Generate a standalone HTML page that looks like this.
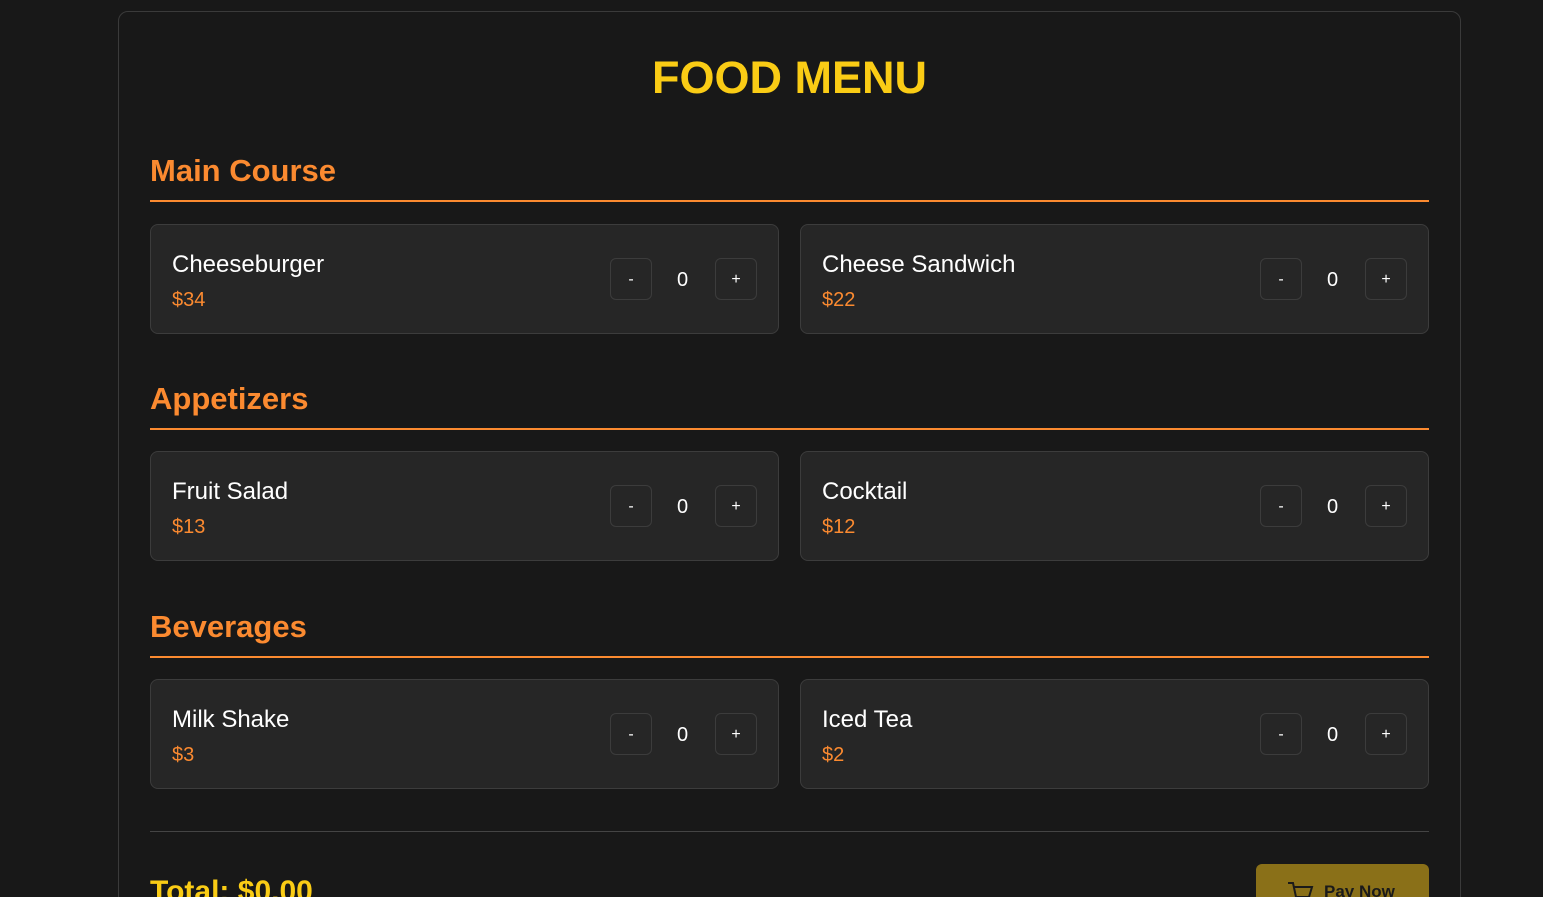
<!DOCTYPE html><html style="overflow:hidden;height:897px"><head><style>
body{margin:0;background:#181818;font-family:"Liberation Sans",sans-serif;width:1543px;height:897px;overflow:hidden;position:relative}
.c{position:absolute;left:118px;top:11px;width:1341px;height:900px;border:1px solid #3a3a3a;border-radius:10px;background:#181818}
h1{position:absolute;left:0;width:1579px;top:52px;margin:0;text-align:center;color:#facc15;font-size:45px;font-weight:bold;line-height:52px}
.h{position:absolute;left:150px;width:1279px;color:#fb8a30;font-size:31px;font-weight:bold;border-bottom:2px solid #fb8a30;height:46px;line-height:34px}
.card{position:absolute;width:627px;height:108px;background:#262626;border:1px solid #3c3c3c;border-radius:8px}
.n{position:absolute;left:21px;top:26px;color:#fff;font-size:24px}
.p{position:absolute;left:21px;top:64px;color:#fb8a30;font-size:20px}
.b{position:absolute;top:33px;border:1px solid #3c3c3c;border-radius:6px;color:#fff;font-size:16px;text-align:center;line-height:42px;box-sizing:border-box;width:42px;height:42px}
.q{position:absolute;left:526px;top:44px;color:#fff;font-size:20px}
</style></head><body>
<div class="c"></div>
<h1>FOOD MENU</h1>
<div class="h" style="top:154px">Main Course</div>
<div class="h" style="top:382px">Appetizers</div>
<div class="h" style="top:610px">Beverages</div>

<div class="card" style="left:150px;top:224px"><div class="n">Cheeseburger</div><div class="p">$34</div><div class="b" style="left:459px">-</div><div class="q">0</div><div class="b" style="left:564px">+</div></div>
<div class="card" style="left:800px;top:224px"><div class="n">Cheese Sandwich</div><div class="p">$22</div><div class="b" style="left:459px">-</div><div class="q">0</div><div class="b" style="left:564px">+</div></div>
<div class="card" style="left:150px;top:451px"><div class="n">Fruit Salad</div><div class="p">$13</div><div class="b" style="left:459px">-</div><div class="q">0</div><div class="b" style="left:564px">+</div></div>
<div class="card" style="left:800px;top:451px"><div class="n">Cocktail</div><div class="p">$12</div><div class="b" style="left:459px">-</div><div class="q">0</div><div class="b" style="left:564px">+</div></div>
<div class="card" style="left:150px;top:679px"><div class="n">Milk Shake</div><div class="p">$3</div><div class="b" style="left:459px">-</div><div class="q">0</div><div class="b" style="left:564px">+</div></div>
<div class="card" style="left:800px;top:679px"><div class="n">Iced Tea</div><div class="p">$2</div><div class="b" style="left:459px">-</div><div class="q">0</div><div class="b" style="left:564px">+</div></div>

<div style="position:absolute;left:150px;top:831px;width:1279px;height:1px;background:#444"></div>
<div style="position:absolute;left:150px;top:875px;color:#facc15;font-size:30px;font-weight:bold">Total: $0.00</div>
<div style="position:absolute;left:1256px;top:864px;width:173px;height:50px;background:#8a7018;border-radius:6px;color:#1a1a1a;font-weight:bold;font-size:17px">
<svg style="position:absolute;left:30px;top:16px" width="28" height="24" viewBox="0 0 28 24" fill="none" stroke="#1a1a1a" stroke-width="2"><path d="M2 3h5l3 14h13l3-10H8"/></svg>
<span style="position:absolute;left:68px;top:18px">Pay Now</span></div>
</body></html>
